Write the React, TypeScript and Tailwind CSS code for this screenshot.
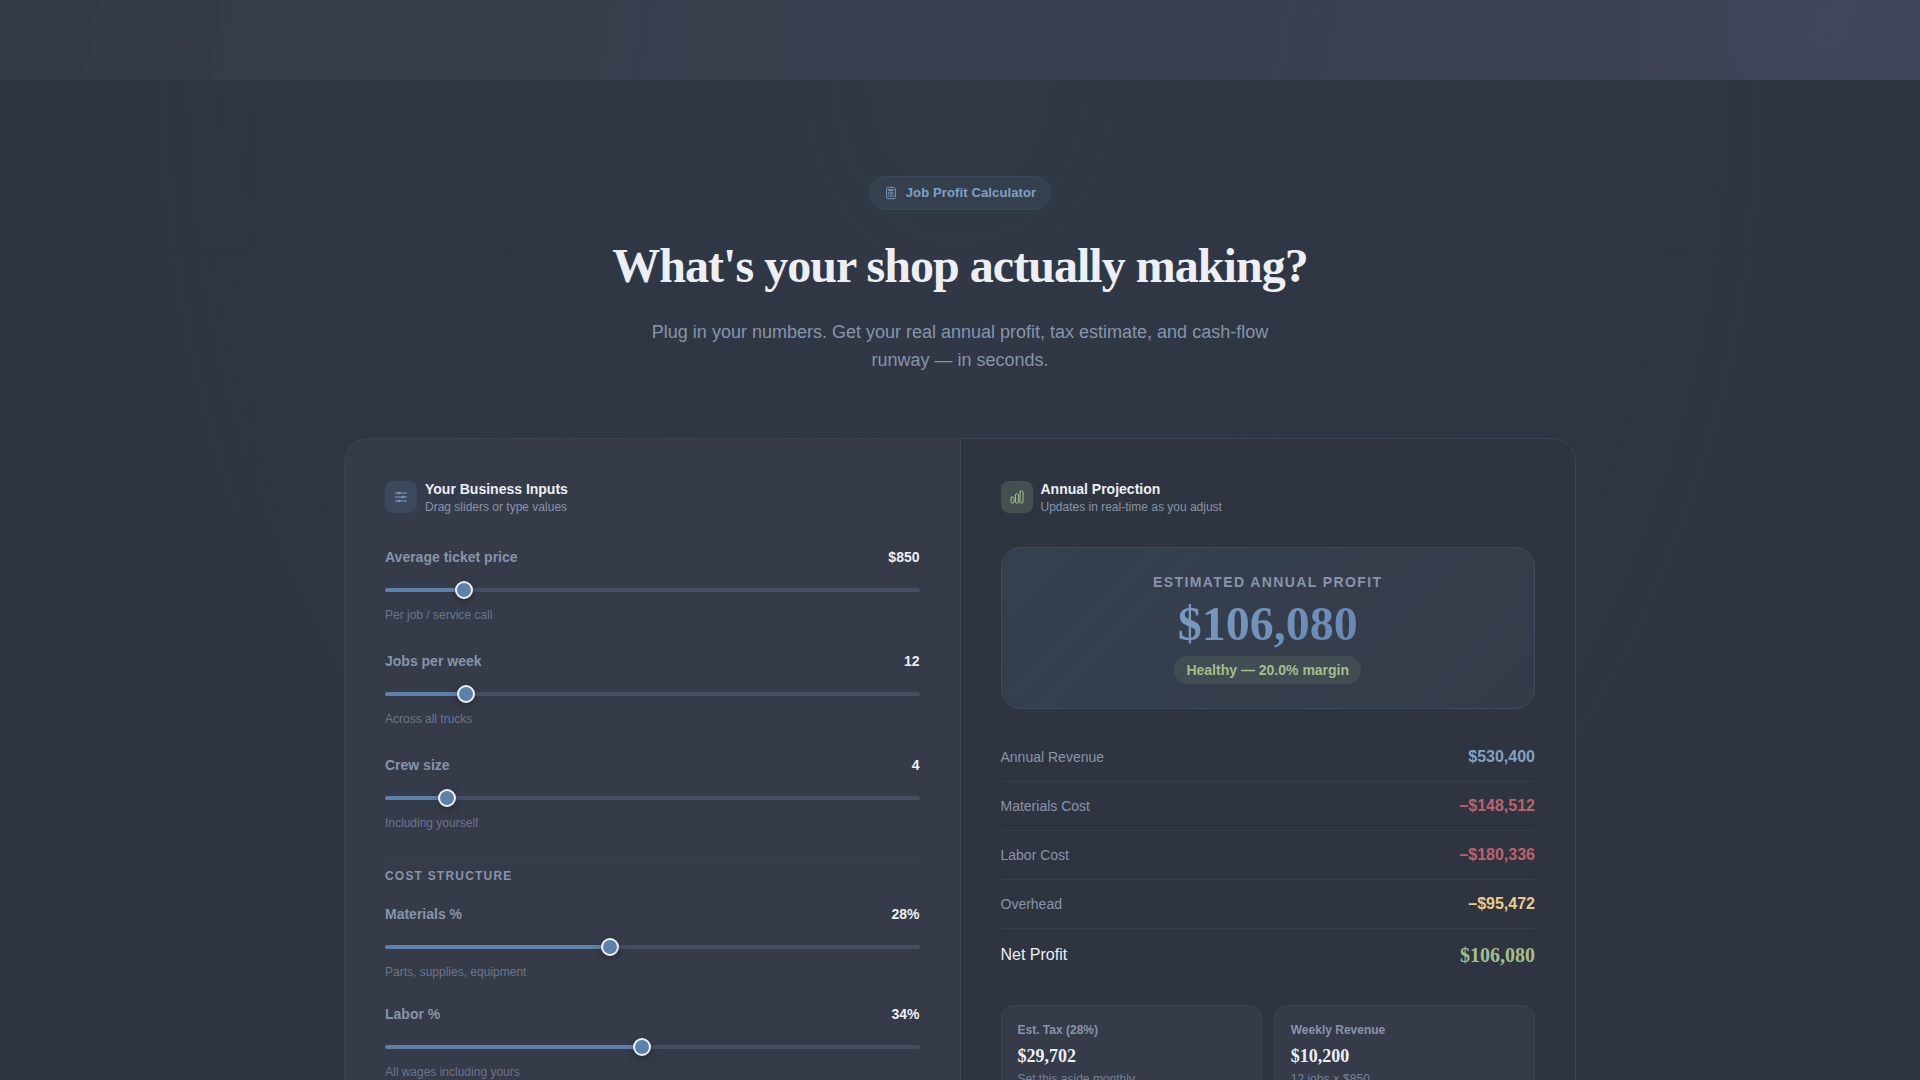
import React, { useState } from "react";
import { HiOutlineAdjustmentsHorizontal, HiOutlineCalculator, HiOutlineChartBar } from "react-icons/hi2";

type Field = {
	id: string;
	label: string;
	hint: string;
	min: number;
	max: number;
	format: (v: number) => string;
};

type FieldRowProps = {
	field: Field;
	value: number;
	onChange: (id: string, v: number) => void;
};

const money = (v: number) => "$" + Math.round(v).toLocaleString("en-US");
const percent = (v: number) => `${v}%`;

const volumeFields: Field[] = [
	{ id: "ticket", label: "Average ticket price", hint: "Per job / service call", min: 200, max: 5000, format: money },
	{ id: "jobs", label: "Jobs per week", hint: "Across all trucks", min: 1, max: 80, format: String },
	{ id: "crew", label: "Crew size", hint: "Including yourself", min: 1, max: 30, format: String },
];

const costFields: Field[] = [
	{ id: "materials", label: "Materials %", hint: "Parts, supplies, equipment", min: 5, max: 60, format: percent },
	{ id: "labor", label: "Labor %", hint: "All wages including yours", min: 10, max: 60, format: percent },
	{ id: "overhead", label: "Overhead %", hint: "Rent, insurance, fuel, software", min: 5, max: 40, format: percent },
];

const rangeCls =
	"block w-full h-[18px] mt-3.5 appearance-none bg-transparent cursor-pointer " +
	"[&::-webkit-slider-runnable-track]:h-1 [&::-webkit-slider-runnable-track]:rounded-sm " +
	"[&::-webkit-slider-runnable-track]:bg-[linear-gradient(to_right,#5e81ac_var(--fill),#454f61_var(--fill))] " +
	"[&::-webkit-slider-thumb]:appearance-none [&::-webkit-slider-thumb]:size-[18px] [&::-webkit-slider-thumb]:-mt-[7px] " +
	"[&::-webkit-slider-thumb]:rounded-full [&::-webkit-slider-thumb]:border-2 [&::-webkit-slider-thumb]:border-[#eceff4] " +
	"[&::-webkit-slider-thumb]:bg-[#5e81ac] [&::-webkit-slider-thumb]:shadow-[0_2px_6px_rgba(0,0,0,0.3)]";

function FieldRow({ field, value, onChange }: FieldRowProps) {
	const fill = ((value - field.min) / (field.max - field.min)) * 100;
	return (
		<div>
			<div className="flex items-center justify-between text-sm font-bold">
				<label htmlFor={field.id} className="text-[#8794aa]">{field.label}</label>
				<output htmlFor={field.id} className="text-[#eceff4]">{field.format(value)}</output>
			</div>
			<input
				id={field.id}
				type="range"
				min={field.min}
				max={field.max}
				value={value}
				onChange={(e) => onChange(field.id, Number(e.target.value))}
				className={rangeCls}
				style={{ "--fill": `${fill}%` } as React.CSSProperties}
			/>
			<p className="mt-2 text-xs text-[#6b758a]">{field.hint}</p>
		</div>
	);
}

function PanelHeader({ icon, iconCls, title, sub }: { icon: React.ReactNode; iconCls: string; title: string; sub: string }) {
	return (
		<div className="flex items-center gap-2 mb-8">
			<div className={`flex size-8 items-center justify-center rounded-lg text-base ${iconCls}`}>{icon}</div>
			<div>
				<h2 className="text-sm font-bold text-[#eceff4]">{title}</h2>
				<p className="text-xs text-[#8794aa]">{sub}</p>
			</div>
		</div>
	);
}

function ResultRow({ label, value, valueCls }: { label: string; value: string; valueCls: string }) {
	return (
		<div className="flex items-center justify-between border-b border-[#373e4c] py-3">
			<dt className="text-sm text-[#8794aa]">{label}</dt>
			<dd className={`text-base font-bold ${valueCls}`}>{value}</dd>
		</div>
	);
}

function MiniCard({ label, value, note }: { label: string; value: string; note: string }) {
	return (
		<div className="rounded-xl border border-[#3b4252] bg-[#353b49] p-4">
			<div className="text-xs font-bold text-[#8794aa]">{label}</div>
			<div className="mt-1 font-['Liberation_Serif',serif] text-lg font-bold text-[#eceff4]">{value}</div>
			<div className="mt-px text-xs text-[#778298]">{note}</div>
		</div>
	);
}

export default function App() {
	const [values, setValues] = useState<Record<string, number>>({
		ticket: 850,
		jobs: 12,
		crew: 4,
		materials: 28,
		labor: 34,
		overhead: 18,
	});
	const update = (id: string, v: number) => setValues((prev) => ({ ...prev, [id]: v }));

	const weekly = values.ticket * values.jobs;
	const revenue = weekly * 52;
	const materials = (revenue * values.materials) / 100;
	const labor = (revenue * values.labor) / 100;
	const overhead = (revenue * values.overhead) / 100;
	const profit = revenue - materials - labor - overhead;
	const margin = (profit / revenue) * 100;
	const status = margin >= 15 ? "Healthy" : margin >= 5 ? "Tight" : "At risk";

	return (
		<div className="h-screen overflow-y-auto [scrollbar-width:none] bg-[#2e3440] font-['Liberation_Sans',Arial,sans-serif]">
			{/* End of the hero band */}
			<div className="h-20 bg-[radial-gradient(circle_at_95%_20px,rgba(94,110,172,0.10),transparent_200px),linear-gradient(100deg,#343b48,#3d4354)]" />

			<section className="bg-[radial-gradient(ellipse_at_50%_0%,rgba(94,129,172,0.06),transparent_70%)] px-6 py-24">
				<div className="mx-auto max-w-[1232px]">
					<div className="flex flex-col items-center text-center">
						<div className="flex items-center gap-2 rounded-full border border-[#3c4a5f] bg-[#35404f] px-3.5 py-1.5 text-[13px] leading-5 font-bold tracking-[0.01em] text-[#81a1c1]">
							<HiOutlineCalculator className="size-3.5" />
							Job Profit Calculator
						</div>
						<h1 className="mt-8 font-['Liberation_Serif',serif] text-5xl leading-none font-bold tracking-[-0.02em] text-[#eceff4]">
							What's your shop actually making?
						</h1>
						<p className="mt-7 max-w-[640px] text-lg leading-7 text-[#8794aa]">
							Plug in your numbers. Get your real annual profit, tax estimate, and cash-flow runway — in seconds.
						</p>
					</div>

					<div className="mt-16 grid grid-cols-2 gap-px overflow-hidden rounded-3xl border border-[#3b4252] bg-[#3f4656]">
						<div className="bg-[#353b49] p-10">
							<PanelHeader
								icon={<HiOutlineAdjustmentsHorizontal />}
								iconCls="bg-[#3c495c] text-[#81a1c1]"
								title="Your Business Inputs"
								sub="Drag sliders or type values"
							/>
							<div className="flex flex-col gap-7">
								{volumeFields.map((f) => (
									<FieldRow key={f.id} field={f} value={values[f.id]} onChange={update} />
								))}
							</div>
							<h3 className="mt-7 mb-5 border-t border-[#3b4252] pt-2 text-xs font-bold tracking-widest text-[#8794aa] uppercase">
								Cost Structure
							</h3>
							<div className="flex flex-col gap-6">
								{costFields.map((f) => (
									<FieldRow key={f.id} field={f} value={values[f.id]} onChange={update} />
								))}
							</div>
						</div>

						<div className="bg-[#2e3440] p-10">
							<PanelHeader
								icon={<HiOutlineChartBar />}
								iconCls="bg-[#454f50] text-[#a3be8c]"
								title="Annual Projection"
								sub="Updates in real-time as you adjust"
							/>
							<div className="flex flex-col items-center rounded-[20px] border border-[#3d4b60] bg-[linear-gradient(135deg,#34404f,#363b49)] p-6">
								<div className="text-sm font-bold tracking-widest text-[#8794aa] uppercase">Estimated Annual Profit</div>
								<div className="mt-2 bg-[linear-gradient(135deg,#7b9cc0,#6587b3)] bg-clip-text font-['Liberation_Serif',serif] text-5xl leading-none font-bold text-transparent">
									{money(profit)}
								</div>
								<div className="mt-2 rounded-full bg-[#424d53] px-3 py-1 text-sm font-bold text-[#a3be8c]">
									{status} — {margin.toFixed(1)}% margin
								</div>
							</div>

							<dl className="mt-6">
								<ResultRow label="Annual Revenue" value={money(revenue)} valueCls="text-[#81a1c1]" />
								<ResultRow label="Materials Cost" value={"–" + money(materials)} valueCls="text-[#bf616a]" />
								<ResultRow label="Labor Cost" value={"–" + money(labor)} valueCls="text-[#bf616a]" />
								<ResultRow label="Overhead" value={"–" + money(overhead)} valueCls="text-[#ebcb8b]" />
								<div className="flex items-center justify-between py-3">
									<dt className="text-base text-[#eceff4]">Net Profit</dt>
									<dd className="font-['Liberation_Serif',serif] text-xl font-bold text-[#a3be8c]">{money(profit)}</dd>
								</div>
							</dl>

							<div className="mt-6 grid grid-cols-2 gap-3">
								<MiniCard label="Est. Tax (28%)" value={money(profit * 0.28)} note="Set this aside monthly" />
								<MiniCard label="Weekly Revenue" value={money(weekly)} note={`${values.jobs} jobs × ${money(values.ticket)}`} />
							</div>
						</div>
					</div>
				</div>
			</section>
		</div>
	);
}
